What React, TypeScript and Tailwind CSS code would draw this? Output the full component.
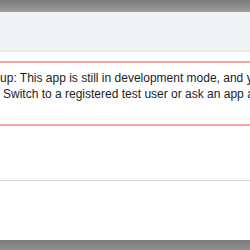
export default function App() {
  return (
    <div className="w-[250px] h-[250px] overflow-hidden bg-white flex flex-col" style={{ fontFamily: '"Liberation Sans", Arial, sans-serif' }}>
      <div className="h-[12px] shrink-0 bg-gradient-to-b from-[#7a7a7a] to-[#9c9c9c]" />
      <div className="h-[38px] shrink-0 bg-[#f2f3f5]" />
      <div className="h-[2px] shrink-0 bg-[#eaebed]" />
      <div className="h-[9px] shrink-0 bg-white" />
      <div className="h-[65px] shrink-0 border-y-2 border-[#f4a3a5] flex flex-col text-[12px] leading-[16px] text-[#1c1e21] pt-[7px] overflow-hidden">
        <div className="whitespace-nowrap ml-[-64px]">App not set up: This app is still in development mode, and you don't have access to it.</div>
        <div className="whitespace-nowrap ml-[3px]">Switch to a registered test user or ask an app admin for permissions.</div>
      </div>
      <div className="h-[54px] shrink-0 bg-white" />
      <div className="h-px shrink-0 bg-[#dcdcdc]" />
      <div className="flex-1 bg-white" />
      <div className="h-[10px] shrink-0 bg-gradient-to-b from-[#7c7c7c] to-[#8e8e8e]" />
    </div>
  );
}
